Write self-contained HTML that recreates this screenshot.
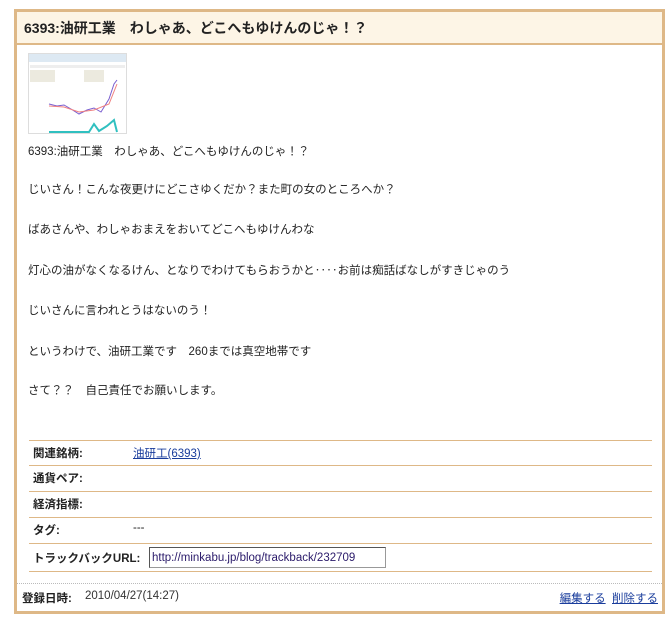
<!DOCTYPE html>
<html><head><meta charset="utf-8"><style>
body{margin:0;background:#fff;font-family:"Liberation Sans","Noto Sans CJK JP",sans-serif;font-size:11.5px;color:#222;}
.box{position:absolute;left:14px;top:9px;width:645px;height:599px;border:3px solid #deb887;}
.hd{height:31px;background:#fdf5e6;border-bottom:2px solid #deb887;font-weight:bold;font-size:14px;line-height:33px;padding-left:7px;color:#222;}
.t{position:absolute;left:11px;white-space:nowrap;}
.img{position:absolute;left:11px;top:41px;width:97px;height:79px;border:1px solid #ddd;background:#fff;}
.row{position:absolute;left:12px;width:623px;border-top:1px solid #deb887;height:25px;}
.row b{position:absolute;left:4px;top:4px;white-space:nowrap;}
.row span{position:absolute;left:104px;top:4px;}
a{color:#1a3d9c;}
.ft{position:absolute;left:0;right:0;top:571px;border-top:1px dotted #bbb;height:26px;}
</style></head><body>
<div class="box">
<div class="hd">6393:油研工業　わしゃあ、どこへもゆけんのじゃ！？</div>
<div class="img"><svg width="97" height="79">
<rect x="0" y="0" width="97" height="8" fill="#dde9f3"/>
<rect x="1" y="11" width="95" height="3" fill="#eee"/>
<rect x="1" y="16" width="25" height="12" fill="#eceadf"/><rect x="55" y="16" width="20" height="12" fill="#eceadf"/>
<polyline points="20,50 28,52 35,51 42,55 50,60 58,56 65,54 72,58 80,45 85,30 88,26" fill="none" stroke="#7a5fd0" stroke-width="1"/>
<polyline points="20,52 35,53 50,58 65,56 80,50 88,30" fill="none" stroke="#f08080" stroke-width="1"/>
<polyline points="20,78 60,78 65,70 70,77 78,72 85,66 88,78" fill="none" stroke="#30c0c0" stroke-width="2"/>
</svg></div>
<div class="t" style="top:131px">6393:油研工業　わしゃあ、どこへもゆけんのじゃ！？</div>
<div class="t" style="top:169px">じいさん！こんな夜更けにどこさゆくだか？また町の女のところへか？</div>
<div class="t" style="top:209px">ばあさんや、わしゃおまえをおいてどこへもゆけんわな</div>
<div class="t" style="top:250px">灯心の油がなくなるけん、となりでわけてもらおうかと‥‥お前は痴話ばなしがすきじゃのう</div>
<div class="t" style="top:290px">じいさんに言われとうはないのう！</div>
<div class="t" style="top:331px">というわけで、油研工業です　260までは真空地帯です</div>
<div class="t" style="top:370px">さて？？　自己責任でお願いします。</div>
<div class="row" style="top:428px"><b>関連銘柄:</b><span><a href="#">油研工(6393)</a></span></div>
<div class="row" style="top:453px"><b>通貨ペア:</b></div>
<div class="row" style="top:479px"><b>経済指標:</b></div>
<div class="row" style="top:505px"><b>タグ:</b><span>---</span></div>
<div class="row" style="top:531px;height:27px;border-bottom:1px solid #deb887"><b style="top:6px">トラックバックURL:</b><div style="position:absolute;left:120px;top:3px;width:233px;height:19px;border:1px solid #555;border-right-color:#999;border-bottom-color:#999;line-height:20px;padding-left:2px;color:#2a1a6a;">http://minkabu.jp/blog/trackback/232709</div></div>
<div class="ft"><b style="position:absolute;left:5px;top:6px">登録日時:</b><span style="position:absolute;left:68px;top:6px;color:#333">2010/04/27(14:27)</span>
<span style="position:absolute;right:4px;top:6px"><a href="#">編集する</a>&nbsp; <a href="#">削除する</a></span></div>
</div>
</body></html>
